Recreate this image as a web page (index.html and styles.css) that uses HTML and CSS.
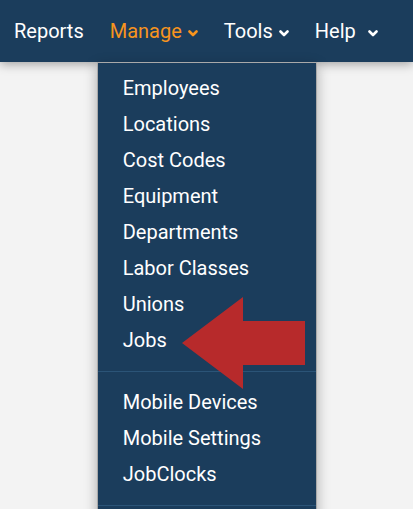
FILE: index.html
```html
<!DOCTYPE html>
<html>
<head>
<meta charset="utf-8">
<link rel="stylesheet" href="styles.css">
</head>
<body>
<nav class="navbar">
  <div class="nav-item">Reports</div>
  <div class="nav-item active">Manage <svg class="chev" viewBox="0 0 10 7" width="10" height="7"><polyline points="1.5,1.5 5,5 8.5,1.5"/></svg>
    <div class="dropdown">
      <div class="dd-item">Employees</div>
      <div class="dd-item">Locations</div>
      <div class="dd-item">Cost Codes</div>
      <div class="dd-item">Equipment</div>
      <div class="dd-item">Departments</div>
      <div class="dd-item">Labor Classes</div>
      <div class="dd-item">Unions</div>
      <div class="dd-item">Jobs</div>
      <div class="dd-divider"></div>
      <div class="dd-item">Mobile Devices</div>
      <div class="dd-item">Mobile Settings</div>
      <div class="dd-item">JobClocks</div>
      <div class="dd-divider"></div>
    </div>
  </div>
  <div class="nav-item">Tools <svg class="chev" viewBox="0 0 10 7" width="10" height="7"><polyline points="1.5,1.5 5,5 8.5,1.5"/></svg></div>
  <div class="nav-item help">Help <svg class="chev" viewBox="0 0 10 7" width="10" height="7"><polyline points="1.5,1.5 5,5 8.5,1.5"/></svg></div>
</nav>
<svg class="arrow" width="130" height="100" viewBox="0 0 130 100">
  <polygon points="0,46 61,0 61,24 123,24 123,68 61,68 61,92" fill="#b72a2b"/>
</svg>
</body>
</html>
```
FILE: styles.css
```css
html, body {
  margin: 0;
  padding: 0;
}
body {
  background: #f3f3f3;
  font-family: Roboto, "Liberation Sans", sans-serif;
  height: 509px;
  overflow: hidden;
  position: relative;
}
.navbar {
  background: #1b3d5c;
  height: 62px;
  display: flex;
  align-items: center;
  padding-left: 14px;
  gap: 26px;
  box-shadow: 0 2px 10px rgba(0,0,0,0.35);
  position: relative;
  z-index: 2;
}
.nav-item {
  color: #ffffff;
  font-size: 20px;
  font-weight: 400;
  display: flex;
  align-items: center;
  position: relative;
  height: 62px;
}
.nav-item.active {
  color: #f7941e;
}
.chev {
  margin-left: 6px;
  margin-top: 5px;
  fill: none;
  stroke: currentColor;
  stroke-width: 2.6;
  stroke-linecap: round;
  stroke-linejoin: round;
}
.help .chev {
  margin-left: 12px;
}
.dropdown {
  position: absolute;
  top: 62px;
  left: -13px;
  background: #1b3d5c;
  border: 1px solid #a9a9a9;
  border-bottom: none;
  padding-top: 7px;
  box-shadow: 0 4px 12px rgba(0,0,0,0.3);
  height: 460px;
  box-sizing: border-box;
  width: 220px;
}
.dd-item {
  color: #ffffff;
  font-size: 20px;
  font-weight: 400;
  line-height: 36px;
  padding-left: 25px;
}
.dd-divider {
  height: 1px;
  background: #2b5477;
  margin: 13px 0 12px;
}
.arrow {
  position: absolute;
  left: 182px;
  top: 297px;
  z-index: 3;
}
```
